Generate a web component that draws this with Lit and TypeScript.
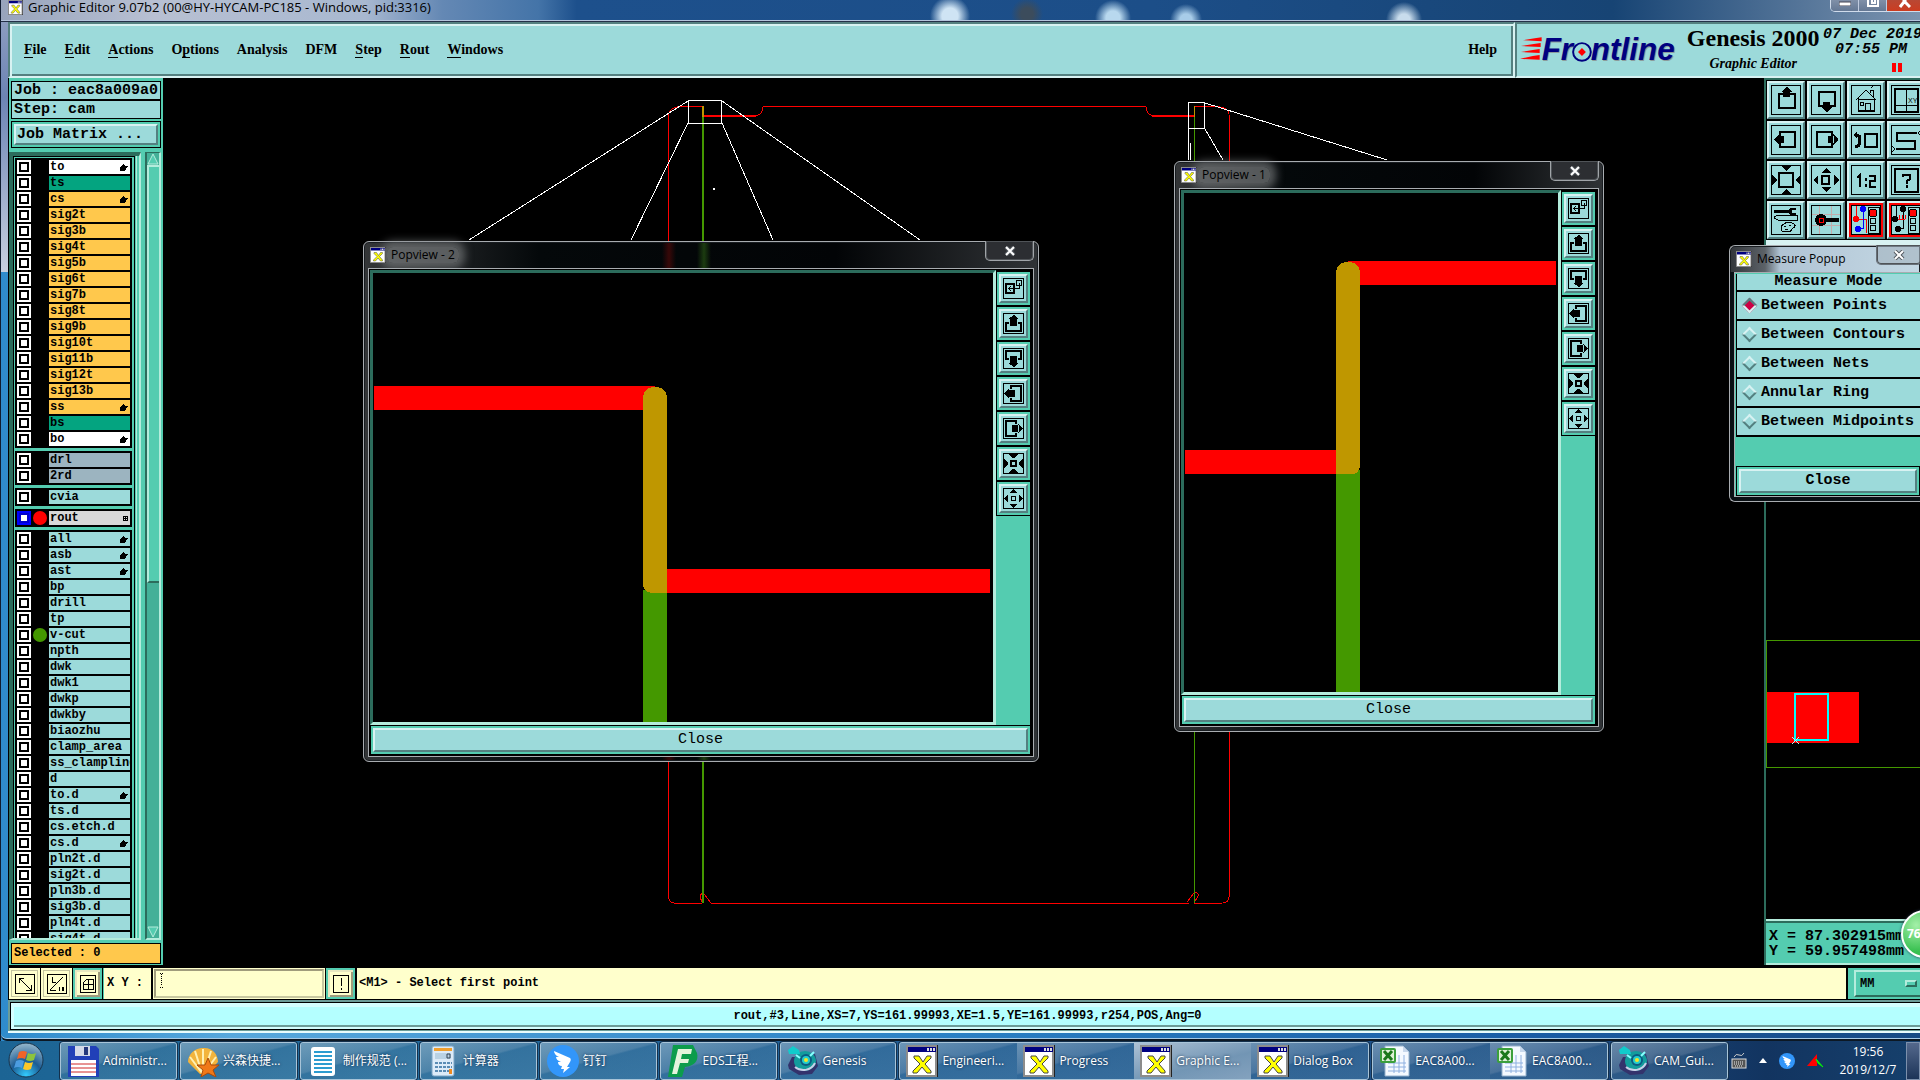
import { LitElement, html, svg, css, TemplateResult } from "lit";
import { customElement, state } from "lit/decorators.js";
import { classMap } from "lit/directives/class-map.js";

interface Layer {
  name: string;
  kind: string;
  hand?: boolean;
  grid?: boolean;
  dot?: string;
}

const L = (name: string, kind = "misc", extra: Partial<Layer> = {}): Layer => ({ name, kind, ...extra });
const hand = { hand: true };

const GROUPS: Layer[][] = [
  [
    L("to", "silk", hand), L("ts", "mask"), L("cs", "signal", hand),
    ...["sig2t", "sig3b", "sig4t", "sig5b", "sig6t", "sig7b", "sig8t", "sig9b", "sig10t", "sig11b", "sig12t", "sig13b"].map((n) => L(n, "signal")),
    L("ss", "signal", hand), L("bs", "mask"), L("bo", "silk", hand),
  ],
  [L("drl", "drill"), L("2rd", "drill")],
  [L("cvia")],
  [L("rout", "rout", { grid: true, dot: "red" })],
  [
    L("all", "misc", hand), L("asb", "misc", hand), L("ast", "misc", hand), L("bp"), L("drill"), L("tp"),
    L("v-cut", "misc", { dot: "green" }), L("npth"), L("dwk"), L("dwk1"), L("dwkp"), L("dwkby"), L("biaozhu"),
    L("clamp_area"), L("ss_clampline"), L("d"), L("to.d", "misc", hand), L("ts.d"), L("cs.etch.d"),
    L("cs.d", "misc", hand), L("pln2t.d"), L("sig2t.d"), L("pln3b.d"), L("sig3b.d"), L("pln4t.d"), L("sig4t.d"),
  ],
];

const MENUS: [string, number][] = [
  ["File", 0], ["Edit", 0], ["Actions", 0], ["Options", 1], ["Analysis", -1],
  ["DFM", -1], ["Step", 0], ["Rout", 0], ["Windows", 0],
];

const MODES = ["Between Points", "Between Contours", "Between Nets", "Annular Ring", "Between Midpoints"];

/* Tool glyphs, drawn in a 30 x 30 cell */
const TOOLS: Record<string, TemplateResult> = {
  up: svg`<rect x="8" y="9" width="16" height="14" fill="none" stroke="#000" stroke-width="2"/><path d="M12 6h7v6h-7zM15 2h1l2 2 3 3h-11l3-3z"/>`,
  down: svg`<rect x="8" y="7" width="16" height="14" fill="none" stroke="#000" stroke-width="2"/><path d="M12 17h7v7h-7zM10 22h11l-3 3-2 2h-1l-2-2z"/>`,
  home: svg`<path d="M5 15 15 5l10 10M7 13v13h16V13M7 14h16M19 8V5h3v7M20 3l2-2M14 26v-8h5v8M9 17h3v3h-3z" fill="none" stroke="#000"/><path d="M7 25h16v2H7z"/>`,
  xy: svg`<rect x="4" y="4" width="23" height="23" fill="none" stroke="#000" stroke-width="2"/><path d="M15.500 3v24M3 20.500h24" stroke="#000" fill="none"/><text x="17" y="18" class="tiny">XY</text>`,
  left: svg`<rect x="9" y="7" width="15" height="15" fill="none" stroke="#000" stroke-width="2"/><path d="M7 11h6v7H7zM8 9v11l-3-3-2-2v-1l2-2z"/>`,
  right: svg`<rect x="6" y="7" width="15" height="15" fill="none" stroke="#000" stroke-width="2"/><path d="M17 11h6v7h-6zM22 9v11l3-3 2-2v-1l-2-2z"/>`,
  undo: svg`<rect x="14" y="9" width="12" height="13" fill="none" stroke="#000" stroke-width="2"/><path d="M4 10c5 0 5 2 5 5s-1 7-5 7" fill="none" stroke="#000" stroke-width="3"/><path d="M2 10l4-4v8z"/>`,
  snake: svg`<path d="M26 8H6v8h18v8H5" fill="none" stroke="#000" stroke-width="2"/><path d="M30 5l-3 3 3 3M1 21l3 3-3 3" fill="none" stroke="#000"/>`,
  shrink: svg`<rect x="8" y="8" width="14" height="14" fill="none" stroke="#000" stroke-width="2"/><path d="M10 1h10l-5 5zM10 29h10l-5-5zM1 10v10l5-5zM29 10v10l-5-5z"/>`,
  grow: svg`<rect x="11" y="11" width="7" height="8" fill="none" stroke="#000" stroke-width="2"/><path d="M10 8h10l-5-5zM10 22h10l-5 5zM7 10v10l-5-5zM23 10v10l5-5z"/>`,
  ratio: svg`<path d="M6 13l3-3v12M15 13v3M15 19v3M18 11h6v5h-5v6h6" fill="none" stroke="#000" stroke-width="2"/>`,
  help: svg`<rect x="4" y="4" width="23" height="23" fill="none" stroke="#000" stroke-width="2"/><path d="M12 12v-2h7v4l-3 2v3M16 20v3" fill="none" stroke="#000" stroke-width="2"/>`,
  tools: svg`<path d="M3 5h15v3H3zM17 5l3-2h5v2h-4v3h4v2h-6z"/><path d="M3 12l4-2h19v5H7l-4-2z" fill="none" stroke="#000"/><path d="M10 24c0-5 6-8 11-6s3 4 1 5-1 4-5 4-7 0-7-3zM13 21h2M18 20h2M14 24h3" fill="none" stroke="#000"/>`,
  snap: svg`<path d="M1 9h28M1 20h28M8 1v28M20 1v28" stroke="#c4acac" fill="none"/><circle cx="10" cy="15" r="6"/><path d="M14 13h14v4H14z"/><rect x="8" y="13" width="4" height="4" fill="none" stroke="#f00" stroke-width="1"/>`,
  netColor: svg`<path d="M5 1v13M5 14h10v14" stroke="#f00" fill="none"/><path d="M12 4v19H7" stroke="#00f" fill="none"/><circle cx="5" cy="14" r="3" fill="#f00"/><circle cx="12" cy="4" r="3" fill="#00f"/><circle cx="7" cy="24" r="3" fill="#00f"/><rect x="17" y="2" width="11" height="26" fill="none" stroke="#000"/><circle cx="22" cy="8" r="4" fill="#f00" stroke="#000"/><circle cx="22" cy="16" r="3" fill="none" stroke="#000"/><circle cx="22" cy="23" r="3" fill="none" stroke="#000"/>`,
  netMono: svg`<path d="M5 1v12M12 4v19H7" stroke="#000" fill="none"/><path d="M7 14h7M8 10v4M11 10v4M14 10v4" stroke="#f00" fill="none"/><circle cx="4" cy="14" r="3"/><circle cx="12" cy="4" r="3"/><circle cx="7" cy="24" r="3"/><rect x="17" y="2" width="11" height="26" fill="none" stroke="#000"/><circle cx="22" cy="8" r="4" fill="#f00" stroke="#000"/><circle cx="22" cy="16" r="3" fill="none" stroke="#000"/><circle cx="22" cy="23" r="3" fill="none" stroke="#000"/>`,
};

/* Narrow glyphs of the popview rail, drawn in a 21 x 21 cell */
const RAIL: [string, TemplateResult][] = [
  ["Detach", svg`<rect x="3" y="6" width="8" height="9" fill="none" stroke="#000" stroke-width="2"/><path d="M13.500 2.500h5v5h-5zM16.500 5v5.500H5M8 8l-2 2.500L8 13" fill="none" stroke="#000"/>`],
  ["Pan up", svg`<path d="M6 10H3v8h15v-8h-3" fill="none" stroke="#000" stroke-width="2"/><path d="M7 6h7v7H7zM10 2h1l2 2 3 2H5l3-2z"/>`],
  ["Pan down", svg`<path d="M6 11H3V3h15v8h-3" fill="none" stroke="#000" stroke-width="2"/><path d="M7 8h7v8H7zM5 15h11l-3 2-2 2h-1l-2-2z"/>`],
  ["Pan left", svg`<path d="M8 6V3h10v15H8v-3" fill="none" stroke="#000" stroke-width="2"/><path d="M5 7h7v7H5zM6 5v11l-2-3-3-2v-1l3-2z"/>`],
  ["Pan right", svg`<path d="M13 6V3H3v15h10v-3" fill="none" stroke="#000" stroke-width="2"/><path d="M9 7h7v7H9zM15 5v11l2-3 3-2v-1l-3-2z"/>`],
  ["Zoom out", svg`<rect x="8" y="8" width="5" height="5" fill="none" stroke="#000" stroke-width="2"/><path d="M5 1h11l-5 4h-1zM5 20h11l-5-4h-1zM1 5v11l4-5v-1zM20 5v11l-4-5v-1z"/>`],
  ["Zoom in", svg`<path d="M8.500 8.500h4v4h-4z" fill="none" stroke="#000"/><path d="M7 5h7l-3-4h-1zM7 16h7l-3 4h-1zM5 7v7l-4-3v-1zM16 7v7l4-3v-1z"/>`],
];

const xIcon = (size: number) => svg`<svg class="xicon" width=${size} height=${size} viewBox="0 0 32 32" aria-hidden="true">
  <rect width="32" height="32" fill="#222"/><rect x="1" width="29" height="31" fill="#fff"/>
  <path d="M1 1h29v30H1z" fill="none" stroke="#8c8c8c" stroke-width="2"/>
  <path d="M2 2h28v5H2z" fill="#000080"/><path d="M21 3h2v3h-2zM24 3h2v3h-2zM27 3h2v3h-2z" fill="#ddd"/>
  <path d="M8 11h5l4 6 4-6h4v2l-6 6 6 7v2h-4l-5-6-5 6H7v-2l7-7-6-6z" fill="#ff0" stroke="#444"/></svg>`;

const TASK_ICONS: Record<string, TemplateResult> = {
  floppy: html`<svg width="32" height="32" viewBox="0 0 32 32"><path d="M1 1h28l3 3v28H1z" fill="#2140b8"/><path d="M8 1h15v10H8z" fill="#d4dae8"/><path d="M17 2h4v8h-4z" fill="#24387c"/><path d="M4 15h25v16H4z" fill="#fff"/><path d="M4 19h25M4 23h25M4 27h25" stroke="#d02828"/></svg>`,
  shell: html`<svg width="32" height="32" viewBox="0 0 32 32"><path d="M16 3c9-1 15 6 15 14l-12 12h-6L1 17C1 9 8 3 16 3z" fill="#f3b43c"/><path d="M16 28V4M15 28 8 6M15 28 3 12M17 28l7-22M17 28l12-16" stroke="#fff0b4" stroke-width="2"/><path d="m21 13 3 7 8 0-6 5 3 7-8-4-7 4 2-7-6-5h8z" fill="#f07818" stroke="#a84a08"/></svg>`,
  doc: html`<svg width="32" height="32" viewBox="0 0 32 32"><rect x="4" y="2" width="24" height="29" rx="3" fill="#fff"/><path d="M7 7h18M7 11h18M7 15h18M7 19h18M7 23h18M7 27h18" stroke="#2c9cd0" stroke-width="2"/></svg>`,
  calc: html`<svg width="32" height="32" viewBox="0 0 32 32"><rect x="5" y="1" width="22" height="30" rx="2" fill="#dcebf8" stroke="#7ba4c4"/><path d="M7 3h18v3H7z" fill="#f0a030"/><path d="M8 8h16v6H8z" fill="#b9d2e4"/><path d="M20 9h3v4h-3z" fill="none" stroke="#345"/><path d="M8 18h17M8 22h17M8 26h17" stroke="#5a8cb4" stroke-width="2" stroke-dasharray="3 1"/><path d="M22 24h3v5h-3z" fill="#f08a20"/></svg>`,
  ding: html`<svg width="32" height="32" viewBox="0 0 32 32"><circle cx="16" cy="16" r="16" fill="#3296fa"/><path d="m7 6 16 7c1 1 1 2 0 4l-3 5h3l-7 6 1-4h-3l1-3c-3 0-4-2-4-4l3 0c-3-1-5-3-5-5h3C9 11 7 8 7 6z" fill="#fff"/></svg>`,
  eds: html`<svg width="32" height="32" viewBox="0 0 32 32"><path d="M6 0h20l4 8c2 8-3 13-12 14l-3 10H1z" fill="#0c9c4c"/><path d="M11 4h14l-1 5h-9l-1 5h8l-1 4h-8l-3 11H5z" fill="#e4f4dc"/></svg>`,
  genesis: html`<svg width="32" height="32" viewBox="0 0 32 32"><path d="M1 20 5 12h14l9-3 3 12-6 8-13 1-10-6z" fill="#33336c"/><ellipse cx="18" cy="16" rx="11" ry="10" fill="#139c9c"/><path d="M1 5l5-4 6 4 1 4H2z" fill="#1cc"/><path d="M8 22c6 5 16 4 20-4" fill="none" stroke="#c8d0e8" stroke-width="2"/><circle cx="19" cy="15" r="6" fill="#0b5c84"/><circle cx="19" cy="15" r="4" fill="#2cc"/><circle cx="19" cy="15" r="2" fill="#f4e424"/><path d="M9 10l4 3M27 7l-4 4" stroke="#8ff" stroke-width="2"/></svg>`,
  x: html`<svg width="32" height="32" viewBox="0 0 32 32">${xIcon(32)}</svg>`,
  excel: html`<svg width="32" height="32" viewBox="0 0 32 32"><path d="M6 1h18l6 6v24H6z" fill="#f4f9ff" stroke="#94b0cc"/><path d="M24 1v6h6" fill="#c8d8ec"/><path d="M9 18h18M9 22h18M9 26h18M15 12v16M20 10v18M25 10v18" stroke="#8eb0e0"/><rect x="1" y="3" width="16" height="15" rx="2" fill="#3ca03c"/><rect x="3" y="5" width="12" height="11" fill="#dff0d8"/><path d="m5 6 8 9M13 6l-8 9" stroke="#1c781c" stroke-width="3"/></svg>`,
};

const TASKS: { icon: string; text: string; active?: boolean }[][] = [
  [{ icon: "floppy", text: "Administr..." }],
  [{ icon: "shell", text: "兴森快捷..." }],
  [{ icon: "doc", text: "制作规范 (..." }],
  [{ icon: "calc", text: "计算器" }],
  [{ icon: "ding", text: "钉钉" }],
  [{ icon: "eds", text: "EDS工程..." }],
  [{ icon: "genesis", text: "Genesis" }],
  [
    { icon: "x", text: "Engineeri..." },
    { icon: "x", text: "Progress" },
    { icon: "x", text: "Graphic E...", active: true },
    { icon: "x", text: "Dialog Box" },
  ],
  [{ icon: "excel", text: "EAC8A00..." }, { icon: "excel", text: "EAC8A00..." }],
  [{ icon: "genesis", text: "CAM_Gui..." }],
];

@customElement("app-root")
export class AppRoot extends LitElement {
  @state() private mode = 0;

  static styles = css`
    :host {
      display: block;
      --teal: #54ccb0;
      --teal-dark: #2c6c5c;
      --teal-light: #b4ecdc;
      --cyan: #9cdada;
      --cyan-dark: #548080;
      --cyan-light: #d8f2f2;
      --cream: #ffffcc;
      --mono: "Liberation Mono", monospace;
      --serif: "Liberation Serif", serif;
      --ui: "Open Sans", "Noto Sans CJK SC", sans-serif;
      color: #000;
    }
    * { box-sizing: border-box; }
    button, input, select { font: inherit; color: inherit; margin: 0; padding: 0; border: 0; border-radius: 0; background: none; }
    a { color: inherit; text-decoration: none; }
    svg { display: block; }

    .desktop { height: 100vh; display: flex; flex-direction: column; overflow: hidden; background: #1d5a94; }
    .app { flex: 1; min-height: 0; display: flex; flex-direction: column; border-left: 1px solid #101c30;
      background:
        linear-gradient(#8c9cc0, #6c84b4 30%, #c8d0e0) 0 22px / 7px 250px no-repeat,
        linear-gradient(90deg, #2f8bcc 0, #58a8dc 12%, #2a80c4 50%, #1a5ca4 80%, #174a84 100%); }

    .titlebar { height: 22px; flex: none; position: relative; display: flex; align-items: flex-start; padding-left: 7px; gap: 5px;
      border-bottom: 1px solid #243048; overflow: hidden; box-shadow: inset 0 -1px #b4c4dc;
      background:
        radial-gradient(circle at 949px 16px, #cfe4f4 0 8px, transparent 20px),
        radial-gradient(circle at 1026px 14px, #3c4c5c 0 6px, transparent 16px),
        radial-gradient(circle at 1112px 18px, #b8d8ee 0 7px, transparent 18px),
        radial-gradient(circle at 1185px 20px, #a8cce8 0 6px, transparent 16px),
        radial-gradient(circle at 1403px 20px, #c8dcec 0 6px, transparent 18px),
        linear-gradient(90deg, #98a4bc 0, #b8c0d2 8%, #a8b8d0 19%, #6488b4 23%, #4474a8 28%, #1d508c 30%, #1c4e88 60%, #174474 84%, #7c94b0 100%); }
    .titlebar .title { font: 13px/16px var(--ui); margin-top: -1px; white-space: nowrap; }
    .caption { margin-left: auto; display: flex; height: 12px; width: 94px; margin-top: 0; border: 1px solid #d0dcec; border-top: 0;
      border-radius: 0 0 0 5px; overflow: hidden; margin-right: -4px; }
    .caption button { width: 28px; background: linear-gradient(#8090a8, #647894); border-right: 1px solid #c0cce0; display: flex; justify-content: center; }
    .caption .x { flex: 1; background: linear-gradient(#b84834, #cc3c20); }

    .top { height: 56px; flex: none; margin-left: 7px; display: flex; background: var(--cyan); }
    .menubar { flex: 1; display: flex; padding-left: 14px; align-items: center; font: bold 14px/18px var(--serif);
      border: 2px solid; border-color: var(--cyan-dark) var(--cyan-light) var(--cyan-light) var(--cyan-dark);
      box-shadow: inset 2px 2px var(--cyan-light), inset -2px -2px var(--cyan-dark); }
    .menus { display: flex; gap: 18px; }
    .menus u { text-decoration: none; border-bottom: 1px solid #000; }
    .help { margin-left: auto; margin-right: 16px; }
    .brand { width: 405px; display: flex; overflow: hidden; padding-left: 3px;
      border: 2px solid; border-right: 0; border-color: var(--cyan-dark) #000 var(--cyan-light) var(--cyan-dark); }
    .product { width: 140px; margin-left: 3px; text-align: center; font: bold 24px/26px var(--serif); padding-top: 1px; white-space: nowrap; }
    .product small { display: block; font: italic bold 14px/18px var(--serif); padding-top: 4px; }
    .clock { flex: none; width: 98px; padding: 3px 0 0 1px; font: italic bold 15px/15px var(--mono); white-space: nowrap; display: flex; flex-direction: column; }
    .clock .time { padding-left: 12px; }
    .pause { width: 10px; height: 9px; align-self: flex-end; margin: 6px 18px 0 0; border: solid #f00; border-width: 0 4px; }

    .work { flex: 1; min-height: 0; margin-left: 7px; position: relative; display: grid; grid-template-columns: 155px minmax(0, 1fr) 156px; background: #000; overflow: hidden; }
    .canvas { width: 100%; height: 100%; overflow: hidden; }

    /* Layer list */
    .layers { background: var(--teal); display: flex; flex-direction: column; padding: 3px 2px 1px; margin-bottom: 2px; min-height: 0; border-left: 1px solid #000; }
    .facts { border: 1px solid #000; background: #000; display: grid; gap: 2px; font: bold 15px/18px var(--mono); white-space: pre; }
    .facts div { background: var(--cyan); padding-left: 2px; height: 17px; }
    .matrix { border: 1px solid #000; margin-top: 2px; padding: 2px; }
    .matrix button, .wide button { width: 100%; height: 21px; display: block; background: var(--cyan); border: 2px solid;
      border-color: var(--cyan-light) var(--cyan-dark) var(--cyan-dark) var(--cyan-light); font: bold 15px/17px var(--mono); text-align: center; }
    .matrix button { text-align: left; padding-left: 1px; }
    .scroller { flex: 1; min-height: 0; display: flex; margin: 4px 0 3px -2px; }
    .frame { width: 133px; border: solid; border-width: 4px 2px 2px 4px; padding-right: 2px;
      border-color: var(--teal-dark) var(--teal-light) var(--teal-light) var(--teal-dark); box-shadow: inset -2px 0 var(--teal), inset -3px 0 var(--teal-light); }
    .list { height: 100%; width: 122px; border: 1px solid #000; border-bottom: 0; padding: 1px; display: flex; flex-direction: column; gap: 3px; overflow: hidden; }
    .group { flex: none; width: 117px; background: #000; padding: 2px; display: grid; gap: 2px; }
    .row { height: 14px; display: grid; grid-template-columns: 14px 18px 81px; font: bold 12px/14px var(--mono); }
    .row input { appearance: none; width: 14px; height: 14px; background: #fff; padding: 2px; display: grid; }
    .row input::before { content: ""; border: 2px solid #000; }
    .row.rout input { background: #fff; border: 2px solid #00f; padding: 0; }
    .row.rout input::before { border-color: #00c; border-width: 2px; }
    .dot { width: 14px; height: 14px; border-radius: 50%; margin-left: 2px; }
    .dot.red { background: #f00; }
    .dot.green { background: #449800; }
    .name { background: var(--cyan); padding-left: 1px; display: flex; justify-content: space-between; align-items: center; overflow: hidden; white-space: nowrap; }
    .name svg { flex: none; margin-right: 2px; }
    .silk .name { background: #fff; }
    .mask .name { background: #04a480; }
    .signal .name { background: #ffc84c; }
    .drill .name { background: #9cb4c0; }
    .rout .name { background: #d8d8d8; }
    .scroll { width: 16px; margin-left: 4px; display: flex; flex-direction: column; background: #44b098; border: 2px solid; border-color: var(--teal-dark) var(--teal-light) var(--teal-light) var(--teal-dark); border-top-width: 1px; }
    .thumb { height: 418px; background: var(--teal); border: 2px solid; border-color: var(--teal-light) var(--teal-light) var(--teal-dark) var(--teal-light); border-right-width: 0; }
    .scroll .fill { flex: 1; }
    .scroll button { height: 12px; }
    .selected { border: 1px solid #000; background: #ffc84c; height: 21px; font: bold 12px/18px var(--mono); padding-left: 2px; white-space: pre; }

    /* Right tool panel */
    .side { border-left: 2px solid var(--teal-dark); display: flex; flex-direction: column; overflow: hidden; margin-bottom: 2px; min-width: 0; }
    .tools { flex: none; border-top: 2px solid var(--teal-dark); padding: 1px; display: grid; grid-template-columns: repeat(4, 38px); gap: 2px; }
    .tools button { height: 38px; background: var(--cyan); border: 2px solid; border-color: var(--cyan-light) var(--cyan-dark) var(--cyan-dark) var(--cyan-light); display: grid; place-items: center; }
    .tools button span { border: 1px solid #000; width: 30px; height: 30px; overflow: hidden; }
    .tools svg { margin: -1px; }
    .tools button.hot { background: #f00; }
    .tools button.hot span { background: var(--cyan); }
    .tiny { font: 7px "Liberation Sans", sans-serif; }
    .strip { height: 9px; flex: none; background: var(--cyan-light); }
    .mini { flex: 1; min-height: 0; display: block; width: 100%; }
    .coords { flex: none; height: 46px; border-top: 2px solid var(--teal-light); border-bottom: 2px solid var(--teal-light); box-shadow: inset 0 2px var(--teal-dark);
      background: var(--teal); padding: 8px 0 0 3px; font: bold 15px/15px var(--mono); white-space: pre; }
    .ball { position: absolute; right: -29px; bottom: 9px; width: 48px; height: 48px; border-radius: 50%; border: 2px solid #fff; box-shadow: 0 0 3px #234;
      background: radial-gradient(circle at 30% 30%, #a4f0a8, #38c050 60%); color: #fff; font: bold 12px/44px var(--ui); padding-left: 4px; }

    /* Floating windows */
    .win { position: absolute; display: flex; flex-direction: column; border: 1px solid #a8acb0; border-radius: 6px; padding: 0 4px 4px;
      background: linear-gradient(90deg, #343638 0, #04080a 26%, #020406 70%, #303336 100%); box-shadow: inset 0 0 0 1px #181c20; }
    .pv2 { left: 355px; top: 163px; width: 676px; height: 521px;
      background:
        linear-gradient(90deg, transparent 298px, #380808 305px, transparent 312px),
        linear-gradient(90deg, transparent 333px, #1c3c10 340px, transparent 347px),
        linear-gradient(90deg, #343638 0, #04080a 26%, #020406 70%, #303336 100%); }
    .pv1 { left: 1166px; top: 83px; width: 430px; height: 571px; }
    .mp { left: 1721px; top: 167px; width: 191px; height: 257px; border-right: 0; padding-right: 0; border-radius: 6px 0 0 6px;
      background: linear-gradient(90deg, #33363a 0, #5c6268 35px, #b0c4d4 50px, #c4d8e4 100%); }
    .mp::before { content: ""; position: absolute; inset: 26px 0 0 0; background: #0a1014; border-radius: 0 0 0 6px; z-index: 0; }
    .bar { height: 26px; flex: none; display: flex; align-items: flex-start; padding: 5px 3px 0 2px; gap: 4px; font: 12px/16px var(--ui); position: relative; }
    .bar .cap { padding: 0 4px; margin-left: -3px; border-radius: 6px; background: #808284a0; box-shadow: 0 0 8px 6px #808284a0; white-space: nowrap; }
    .bar .xicon { position: relative; }
    .mp .bar .cap { background: none; box-shadow: none; }
    .bar .close { position: absolute; right: 0; top: -1px; width: 49px; height: 20px; border: 1px solid #a0a4a8; border-top: 0; border-radius: 0 0 5px 5px; background: #2c2e32; display: grid; place-items: center; box-shadow: inset 0 0 0 1px #505458; }
    .mp .bar .close { background: #a4b4c0a0; border-color: #687078; right: -2px; width: 46px; }
    .xicon { flex: none; }
    .body { flex: 1; min-height: 0; border: 1px solid #a8acb0; background: #000; padding: 1px; display: grid; grid-template: minmax(0, 1fr) 30px / minmax(0, 1fr) 36px; position: relative; }
    .view { border: 3px solid; border-color: var(--teal-dark) var(--teal-light) var(--teal-light) var(--teal-dark); width: 100%; height: 100%; margin: 0; padding: 0; overflow: hidden; }
    .rail { padding: 2px 2px 0 0; display: flex; flex-direction: column; gap: 2px; }
    .rail button { width: 33px; height: 33px; margin-left: 1px; background: var(--teal); padding: 2px; flex: none; }
    .rail button span { display: grid; place-items: center; background: var(--cyan); height: 29px; border: 2px solid; border-color: var(--cyan-light) var(--cyan-dark) var(--cyan-dark) var(--cyan-light); }
    .rail svg { outline: 1px solid #000; outline-offset: -1px; }
    .rail .rest { flex: 1; background: var(--teal); margin-top: -1px; }
    .wide { grid-column: 1 / -1; background: var(--teal); border: 1px solid #000; padding: 2px; margin: 0 1px 0 0; }
    .wide button { height: 24px; font: 15px/20px var(--mono); }
    .mp .body { display: flex; flex-direction: column; padding: 1px 0 0 1px; border-right: 0; background: var(--teal); }
    .modes { margin: 0; padding: 0 0 2px 1px; border: 0; min-width: 0; background: #000; display: grid; gap: 2px; font: bold 15px/17px var(--mono); white-space: nowrap; }
    .modes h2 { margin: 0; font: inherit; line-height: 16px; background: var(--cyan); text-align: center; }
    .modes label { background: var(--cyan); height: 27px; display: flex; align-items: center; padding-left: 6px; gap: 5px; }
    .modes input { appearance: none; width: 11px; height: 11px; border: 2px solid; border-color: var(--cyan-light) var(--cyan-dark) var(--cyan-dark) var(--cyan-light); transform: rotate(45deg); flex: none; margin: 0 1px; }
    .modes input:checked { background: #cc0044; border-color: var(--cyan-dark) var(--cyan-light) var(--cyan-light) var(--cyan-dark); }
    .mp .wide { margin: auto 0 0; }
    .mp .wide button { font-weight: bold; }

    /* Command line and status */
    .command { flex: none; height: 33px; margin-left: 7px; background: #000; display: flex; padding: 1px 0 1px 1px; gap: 1px; font: bold 12px/16px var(--mono); }
    .command .tool { width: 31px; background: var(--cream); display: grid; place-items: center; box-shadow: inset 0 0 0 2px var(--cream), inset 0 0 0 3px #c4c4a0; }
    .command .tool.on { width: 29px; border: 2px solid var(--teal); box-shadow: inset 2px 2px #e8e8c0, inset -2px -2px #a09c7c; }
    .xy { background: var(--cream); width: 48px; padding: 7px 0 0 3px; white-space: pre; border-left: 1px solid var(--teal); }
    .field { position: relative; display: flex; margin-left: 1px; padding: 1px; background: var(--cream); width: 172px; }
    .entry { width: 100%; border: 2px solid; border-color: #a09c7c #c8c8a0 #c8c8a0 #a09c7c; padding-left: 4px; }
    .beam { position: absolute; left: 6px; top: 4px; }
    .msg { flex: 1; background: var(--cream); padding: 7px 0 0 2px; margin-left: 1px; }
    .units { width: 72px; background: var(--teal); padding: 2px 0 2px 6px; margin-left: 1px; position: relative; }
    .units select { appearance: none; width: 72px; height: 27px; border: 2px solid; border-color: var(--teal-light) var(--teal-dark) var(--teal-dark) var(--teal-light); padding-left: 4px; }
    .units i { position: absolute; right: 3px; top: 12px; width: 12px; height: 7px; border: 2px solid; border-color: var(--teal-light) var(--teal-dark) var(--teal-dark) var(--teal-light); pointer-events: none; }
    .status { flex: none; height: 33px; margin-left: 7px; background: #6c9c98; border-bottom: 2px solid #e8fcfc; padding: 2px 0 0 2px; }
    .status p { margin: 0; height: 28px; border: 1px solid #000; border-right: 0; background: #b4ffff; font: bold 12px/26px var(--mono); text-align: center; padding-left: 4px;
      box-shadow: inset 3px 4px #d4ffff, inset 0 -2px #d4ffff, inset 0 -4px #6c9c98; }
    .edge { flex: none; height: 8px; border-bottom: 2px solid #0c1824; box-shadow: inset 0 -1px #a4c8e4; border-radius: 0 0 0 6px; }

    /* Taskbar */
    .taskbar { flex: none; height: 39px; display: flex; align-items: center; color: #fff; font: 12px/16px var(--ui); padding-left: 8px; gap: 3px;
      background: linear-gradient(90deg, #1c6494 0, #246c9c 20%, #205c94 50%, #1c4c84 80%, #123460 92%, #16406c 100%); }
    .orb { margin-right: 12px; width: 37px; height: 37px; }
    .tasks { display: flex; height: 38px; border: 1px solid #a8c4d8; border-radius: 3px; overflow: hidden; box-shadow: 0 0 0 1px #14304c; }
    .tasks button { width: 115px; display: flex; align-items: center; gap: 4px; padding-left: 6px; text-align: left; white-space: nowrap; overflow: hidden;
      background: linear-gradient(165deg, #b8ccd880 0, #90acc060 45%, #5888a850 48%, #6c9cb850 100%); text-shadow: 0 0 3px #0c2440; }
    .tasks button svg { flex: none; }
    .multi button { width: 117px; }
    .tasks button.active { background: linear-gradient(165deg, #dce4ecc0, #a4bccca0 60%, #c0d0dca0); }
    .tray { margin-left: auto; display: flex; align-items: center; gap: 12px; height: 100%; }
    .tray time { text-align: center; line-height: 18px; width: 64px; }
    .peek { width: 14px; height: 38px; border: 1px solid #7c90ac; background: linear-gradient(#54688c, #1c3458); margin-left: -6px; }
  `;

  private layerRow(l: Layer) {
    const kind = { row: true, [l.kind]: true };
    return html`<label class=${classMap(kind)}>
      <input type="checkbox" aria-label=${l.name} />
      <span>${l.dot ? html`<div class="dot ${l.dot}"></div>` : ""}</span>
      <span class="name">${l.name}${l.hand
        ? html`<svg width="8" height="8" viewBox="0 0 8 8" shape-rendering="crispEdges"><path d="M0 4l4-4v2h1v1h3v1H7v1H6v2H5v1H0z" /></svg>`
        : l.grid
          ? html`<svg width="5" height="5" viewBox="0 0 5 5" shape-rendering="crispEdges"><path d="M0 0h5v5H0zM1 1v1h1V1zM3 1v1h1V1zM1 3v1h1V3zM3 3v1h1V3z" fill-rule="evenodd" /></svg>`
          : ""}</span>
    </label>`;
  }

  private bar(title: string) {
    return html`<div class="bar">${xIcon(16)}<span class="cap">${title}</span>
      <button class="close" aria-label="Close ${title}">
        <svg width="12" height="10" viewBox="0 0 12 10"><path d="M2 1l8 8M10 1L2 9" stroke="#555a60" stroke-width="4" /><path d="M2 1l8 8M10 1L2 9" stroke="#fff" stroke-width="2" /></svg>
      </button></div>`;
  }

  private popview(cls: string, title: string, art: TemplateResult) {
    return html`<section class="win ${cls}" aria-label=${title}>
      ${this.bar(title)}
      <div class="body">
        <svg class="view" shape-rendering="crispEdges">${art}</svg>
        <div class="rail">
          ${RAIL.map(([label, g]) => html`<button aria-label=${label}><span><svg width="21" height="21" viewBox="0 0 21 21" shape-rendering="crispEdges">${g}</svg></span></button>`)}
          <div class="rest"></div>
        </div>
        <div class="wide"><button>Close</button></div>
      </div>
    </section>`;
  }

  private board() {
    return html`<svg class="canvas" shape-rendering="crispEdges" role="img" aria-label="Board outline">
      <g transform="translate(-163 -78)" fill="none" stroke-width="1">
        <g stroke="#f00">
          <path d="M703 106.500H680q-11 1-11.500 9V897q1 6 6 6M762.500 106.500H1146M762.500 106.500v3q-1 5-6 6M1146.500 106.500v3q1 5 6 6M1194 106.500h23q12 1 12 8V897q-1 6-6 6" />
          <path d="M703 115.500h53M1152 115.500h43" stroke-width="2" />
          <path d="M675 903h27M711 903h478M1194 903h28" stroke-width="1" />
          <path d="M702 902l-2-5q0-4 4-3l7 9M1187 902l7-9q5-1 4 3l-4 7" />
        </g>
        <path d="M703 116v787" stroke="#449800" stroke-width="2" />
        <path d="M1194.500 116v787" stroke="#449800" />
        <path d="M703 106v11" stroke="#bf9700" stroke-width="2" /><path d="M1194.500 106v11" stroke="#bf9700" />
        <g stroke="#fff">
          <path d="M688.500 100.500h33v23h-33zM688 101 469 240M688 123l-57 117M722 123l51 117M722 101l198 139" />
          <path d="M1188.500 102.500h16v26h-16zM1205 103l182 57M1205 129l18 31M1188.500 128v32M1190.500 143v17" />
        </g>
        <path d="M713 188h2v2h-2z" fill="#fff" />
      </g>
    </svg>`;
  }

  private side() {
    const names = ["up", "down", "home", "xy", "left", "right", "undo", "snake", "shrink", "grow", "ratio", "help", "tools", "snap", "netColor", "netMono"];
    return html`<aside class="side">
      <div class="tools">
        ${names.map((n) => html`<button aria-label=${n} class=${n.startsWith("net") ? "hot" : ""}><span><svg width="30" height="30" viewBox="0 0 30 30" shape-rendering="crispEdges">${TOOLS[n]}</svg></span></button>`)}
      </div>
      <div class="strip"></div>
      <svg class="mini" shape-rendering="crispEdges"><g transform="translate(-1766 -249)">
        <path d="M1766 692h93v51h-93z" fill="#f00" />
        <path d="M1766.500 640.500H1930v127h-163.500z" fill="none" stroke="#449800" />
        <path d="M1795 694h33v46h-33z" fill="none" stroke="#0ff" stroke-width="2" />
        <path d="M1792 737l7 7M1799 737l-7 7" stroke="#aff" />
      </g></svg>
      <div class="coords"><div>X = 87.302915mm</div><div>Y = 59.957498mm</div></div>
    </aside>`;
  }

  private logo() {
    return html`<svg width="164" height="52" viewBox="0 0 164 52" role="img" aria-label="Frontline">
      <g fill="#f00"><path d="M22 13v4l-19-1 12-2zM21 19v4L1 22l13-2zM20 25v4l-19-1 12-2zM20 31v5l-20-1 13-3z" /></g>
      <g font-family="Liberation Sans, sans-serif" font-size="32" font-weight="bold" font-style="italic">
        <g fill="#8c9c9c" aria-hidden="true"><text x="23" y="37">Fr</text><text x="73" y="37">ntline</text></g>
        <g fill="#000080"><text x="22" y="36">Fr</text><text x="72" y="36">ntline</text></g>
      </g>
      <circle cx="63" cy="28" r="9" fill="#9cdada" stroke="#000080" stroke-width="2" />
      <path d="M63 24l4 4-4 4-4-4z" fill="#f00" />
    </svg>`;
  }

  render() {
    return html`<div class="desktop">
      <div class="app">
        <header class="titlebar">
          ${xIcon(15)}<span class="title">Graphic Editor 9.07b2 (00@HY-HYCAM-PC185 - Windows, pid:3316)</span>
          <div class="caption">
            <button aria-label="Minimize"><svg width="12" height="6"><path d="M0 2h12v4H0z" fill="#fff" stroke="#445" /></svg></button>
            <button aria-label="Restore"><svg width="12" height="8"><path d="M1 0v6h10V0M5 0v3h3V0" fill="none" stroke="#fff" stroke-width="2" /></svg></button>
            <button class="x" aria-label="Close"><svg width="12" height="8"><path d="M1 7l4-5V0M11 7L6 2M6 3V0" fill="none" stroke="#fff" stroke-width="3" /></svg></button>
          </div>
        </header>
        <div class="top">
          <nav class="menubar">
            <div class="menus">
              ${MENUS.map(([m, i]) => html`<a href="#">${i < 0 ? m : html`${m.slice(0, i)}<u>${m[i]}</u>${m.slice(i + 1)}`}</a>`)}
            </div>
            <a class="help" href="#">Help</a>
          </nav>
          <div class="brand">
            ${this.logo()}
            <div class="product">Genesis 2000<small>Graphic Editor</small></div>
            <div class="clock"><span>07 Dec 2019</span><span class="time">07:55 PM</span><div class="pause"></div></div>
          </div>
        </div>

        <main class="work">
          <div class="layers">
            <div class="facts"><div>Job : eac8a009a0</div><div>Step: cam</div></div>
            <div class="matrix"><button>Job Matrix ...</button></div>
            <div class="scroller">
              <div class="frame"><div class="list">
                ${GROUPS.map((g) => html`<div class="group">${g.map((l) => this.layerRow(l))}</div>`)}
              </div></div>
              <div class="scroll">
                <button aria-label="Scroll up"><svg width="12" height="12"><path d="M1 11L6 1l5 10z" fill="#54ccb0" stroke="#b4ecdc" /></svg></button>
                <div class="thumb"></div><div class="fill"></div>
                <button aria-label="Scroll down"><svg width="12" height="12"><path d="M1 1l5 10L11 1z" fill="#54ccb0" stroke="#b4ecdc" /></svg></button>
              </div>
            </div>
            <div class="selected">Selected : 0</div>
          </div>
          ${this.board()}
          ${this.side()}

          ${this.popview("pv2", "Popview - 2", svg`<g transform="translate(-373 -273)">
            <path d="M374 386h281v24H374zM655 569h335v24H655z" fill="#f00" />
            <path d="M643 590h24v132h-24z" fill="#449800" />
            <path d="M643 399q0-12 12-12t12 12v194h-16q-8-2-8-10z" fill="#bf9700" /></g>`)}
          ${this.popview("pv1", "Popview - 1", svg`<g transform="translate(-1184 -193)">
            <path d="M1348 261h208v24h-208zM1185 450h163v24h-163z" fill="#f00" />
            <path d="M1336 470h24v222h-24z" fill="#449800" />
            <path d="M1336 274q0-12 12-12t12 12v192q-1 8-8 8h-16z" fill="#bf9700" /></g>`)}
          <section class="win mp" aria-label="Measure Popup">
            ${this.bar("Measure Popup")}
            <div class="body">
              <fieldset class="modes">
                <h2>Measure Mode</h2>
                ${MODES.map((m, i) => html`<label><input type="radio" name="mode" .checked=${this.mode === i} @change=${() => (this.mode = i)} />${m}</label>`)}
              </fieldset>
              <div class="wide"><button>Close</button></div>
            </div>
          </section>
          <div class="ball">76</div>
        </main>

        <div class="command">
          <button class="tool" aria-label="Line mode"><svg width="20" height="20" fill="none" stroke="#000" shape-rendering="crispEdges"><path d="M.5.5h19v19H.5zM4 4l12 12M4 9V4h5M16 11v5h-5" /></svg></button>
          <button class="tool" aria-label="Angle mode"><svg width="20" height="20" fill="none" stroke="#000" shape-rendering="crispEdges"><path d="M.5.5h19v19H.5zM3 16L16 3M5 3v5h4M3 16h6M12 13v4M15 13l2 4M17 13l-2 4" /></svg></button>
          <button class="tool on" aria-label="Grid snap"><svg width="16" height="18" fill="none" stroke="#000" shape-rendering="crispEdges"><path d="M.5.5h15v17H.5zM3 14V8l4-4h6v10H3M8 4v10M3 9h10" /></svg></button>
          <label class="xy" for="xy">X Y :</label>
          <div class="field"><input class="entry" id="xy" type="text" />
            <svg class="beam" width="5" height="17" shape-rendering="crispEdges"><path d="M1 1h1M3 1h1M2.500 2v12M1 15h1M3 15h1" stroke="#000" fill="none" stroke-dasharray="1 1" /></svg></div>
          <button class="tool on" aria-label="Alert"><svg width="16" height="18" fill="none" stroke="#000" shape-rendering="crispEdges"><path d="M.5.5h15v17H.5zM8 3v8M8 13v2" /></svg></button>
          <div class="msg">&lt;M1&gt; - Select first point</div>
          <div class="units"><select aria-label="Units"><option>MM</option><option>INCH</option></select><i></i></div>
        </div>
        <div class="status"><p>rout,#3,Line,XS=7,YS=161.99993,XE=1.5,YE=161.99993,r254,POS,Ang=0</p></div>
        <div class="edge"></div>
      </div>

      <footer class="taskbar">
        <button class="orb" aria-label="Start"><svg width="37" height="37" viewBox="0 0 37 37">
          <defs><radialGradient id="g" cx=".5" cy=".95" r=".9"><stop offset="0" stop-color="#3cf" /><stop offset=".5" stop-color="#1c5c94" /><stop offset="1" stop-color="#8cb0c8" /></radialGradient></defs>
          <circle cx="18" cy="18" r="17" fill="url(#g)" stroke="#18344c" />
          <path d="M11 10q4-2 8 0l-2 7q-4-2-8 0z" fill="#f06428" /><path d="M20 11q4 2 8 0l-2 7q-4 2-8 0z" fill="#8cc43c" />
          <path d="M8 19q4-2 8 0l-2 7q-4-2-8 0z" fill="#4c9ce0" /><path d="M17 20q4 2 8 0l-2 7q-4 2-8 0z" fill="#fcc828" /></svg></button>
        ${TASKS.map((g) => html`<div class="tasks ${g.length > 1 ? "multi" : ""}">
          ${g.map((t) => html`<button class=${t.active ? "active" : ""}>${TASK_ICONS[t.icon]}<span>${t.text}</span></button>`)}</div>`)}
        <div class="tray">
          <svg width="16" height="18"><path d="M3 5q2-4 5-2t5-2" fill="none" stroke="#ccc" /><rect x="1" y="7" width="14" height="9" fill="#555" stroke="#ddd" /><path d="M3 10h10M3 12h10M4 14h8" stroke="#eee" stroke-dasharray="1 1" /></svg>
          <svg width="8" height="6"><path d="M0 5l4-5 4 5z" fill="#fff" /></svg>
          <svg width="16" height="16" viewBox="0 0 32 32"><circle cx="16" cy="16" r="16" fill="#3296fa" /><path d="m7 6 16 7c1 1 1 2 0 4l-3 5h3l-7 6 1-4h-3l1-3c-3 0-4-2-4-4l3 0c-3-1-5-3-5-5h3C9 11 7 8 7 6z" fill="#fff" /></svg>
          <svg width="17" height="14"><path d="M0 12L10 0v12z" fill="#f00" /><path d="M9 5l7 8-5-4z" fill="#0f0" stroke="#0f0" /></svg>
          <time><div>19:56</div><div>2019/12/7</div></time>
          <button class="peek" aria-label="Show desktop"></button>
        </div>
      </footer>
    </div>`;
  }
}
